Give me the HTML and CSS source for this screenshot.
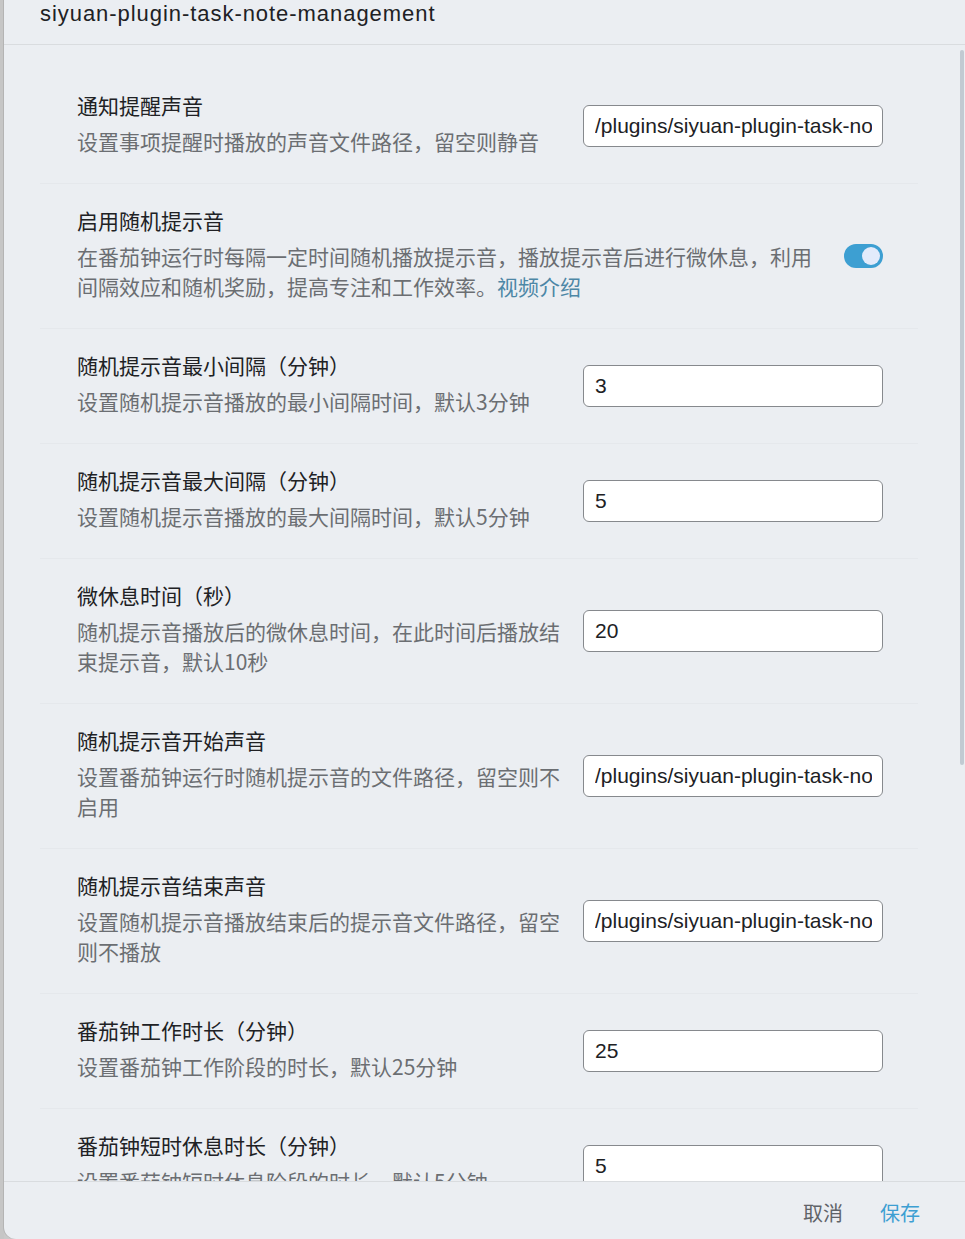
FILE: index.html
```html
<!DOCTYPE html>
<html lang="zh-CN">
<head>
<meta charset="utf-8">
<title>siyuan-plugin-task-note-management</title>
<link rel="stylesheet" href="styles.css">
</head>
<body>
<div class="edge"></div>
<div class="dialog">
  <div class="dialog-header">siyuan-plugin-task-note-management</div>
  <div class="dialog-body">
    <label class="item">
      <div class="label">
        <div class="title">通知提醒声音</div>
        <div class="desc">设置事项提醒时播放的声音文件路径，留空则静音</div>
      </div>
      <input class="field" type="text" value="/plugins/siyuan-plugin-task-note-management/audios/notify.mp3">
    </label>
    <label class="item">
      <div class="label">
        <div class="title">启用随机提示音</div>
        <div class="desc">在番茄钟运行时每隔一定时间随机播放提示音，播放提示音后进行微休息，利用间隔效应和随机奖励，提高专注和工作效率。<a class="link" href="#">视频介绍</a></div>
      </div>
      <span class="switch"><span class="knob"></span></span>
    </label>
    <label class="item">
      <div class="label">
        <div class="title">随机提示音最小间隔（分钟）</div>
        <div class="desc">设置随机提示音播放的最小间隔时间，默认3分钟</div>
      </div>
      <input class="field" type="text" value="3">
    </label>
    <label class="item">
      <div class="label">
        <div class="title">随机提示音最大间隔（分钟）</div>
        <div class="desc">设置随机提示音播放的最大间隔时间，默认5分钟</div>
      </div>
      <input class="field" type="text" value="5">
    </label>
    <label class="item">
      <div class="label">
        <div class="title">微休息时间（秒）</div>
        <div class="desc">随机提示音播放后的微休息时间，在此时间后播放结束提示音，默认10秒</div>
      </div>
      <input class="field" type="text" value="20">
    </label>
    <label class="item">
      <div class="label">
        <div class="title">随机提示音开始声音</div>
        <div class="desc">设置番茄钟运行时随机提示音的文件路径，留空则不启用</div>
      </div>
      <input class="field" type="text" value="/plugins/siyuan-plugin-task-note-management/audios/random_start.mp3">
    </label>
    <label class="item">
      <div class="label">
        <div class="title">随机提示音结束声音</div>
        <div class="desc">设置随机提示音播放结束后的提示音文件路径，留空则不播放</div>
      </div>
      <input class="field" type="text" value="/plugins/siyuan-plugin-task-note-management/audios/random_end.mp3">
    </label>
    <label class="item">
      <div class="label">
        <div class="title">番茄钟工作时长（分钟）</div>
        <div class="desc">设置番茄钟工作阶段的时长，默认25分钟</div>
      </div>
      <input class="field" type="text" value="25">
    </label>
    <label class="item">
      <div class="label">
        <div class="title">番茄钟短时休息时长（分钟）</div>
        <div class="desc">设置番茄钟短时休息阶段的时长，默认5分钟</div>
      </div>
      <input class="field" type="text" value="5">
    </label>
  </div>
  <div class="scroll-thumb"></div>
  <div class="dialog-footer">
    <button class="btn btn-cancel" type="button">取消</button>
    <button class="btn btn-save" type="button">保存</button>
  </div>
</div>
</body>
</html>
```
FILE: styles.css
```css
* { box-sizing: border-box; }

html, body {
  margin: 0;
  padding: 0;
  height: 100%;
}

body {
  display: flex;
  background: #c9c9c9;
  font-family: "Noto Sans CJK SC", "Noto Sans", sans-serif;
  overflow: hidden;
}

.edge {
  width: 4px;
  flex: none;
  background: #c6c6c6;
}

.dialog {
  position: relative;
  flex: 1;
  display: flex;
  flex-direction: column;
  height: 1239px;
  background: #ebeef2;
  border-bottom-left-radius: 12px;
  box-shadow: -1px 0 0 #b4b4b4;
  overflow: hidden;
}

.dialog-header {
  flex: none;
  height: 45px;
  padding-left: 36px;
  border-bottom: 1px solid #d9dcdf;
  font-family: "Liberation Sans", Arial, sans-serif;
  font-size: 22px;
  letter-spacing: 0.95px;
  line-height: 28px;
  color: #202124;
}

.dialog-body {
  flex: 1;
  min-height: 0;
  overflow: hidden;
  padding: 24px 47px 0 36px;
}

.item {
  display: flex;
  align-items: center;
  padding: 21px 35px 21px 37px;
  border-bottom: 1px solid #e5e8ec;
  cursor: default;
}

.label {
  flex: 1;
  min-width: 0;
  margin-right: 16px;
  padding-bottom: 6px;
}

.title {
  font-size: 21px;
  line-height: 30px;
  color: #202124;
}

.desc {
  margin-top: 6px;
  font-size: 21px;
  line-height: 30px;
  color: #6b6e72;
}

.link {
  color: #4d87a6;
  text-decoration: none;
}

.field {
  flex: none;
  width: 300px;
  height: 42px;
  margin: 0;
  padding: 0 10px 0 11px;
  border: 1px solid #86898d;
  border-radius: 6px;
  background: #ffffff;
  font-family: "Liberation Sans", Arial, sans-serif;
  font-size: 21px;
  color: #202124;
  outline: none;
}

.switch {
  flex: none;
  display: flex;
  align-items: center;
  justify-content: flex-end;
  width: 39px;
  height: 24px;
  padding: 0 3px;
  border-radius: 12px;
  background: #3d9fd2;
}

.knob {
  width: 18px;
  height: 18px;
  border-radius: 50%;
  background: #e3ebfb;
}

.scroll-thumb {
  position: absolute;
  right: 1px;
  top: 50px;
  width: 4px;
  height: 715px;
  border-radius: 2px;
  background: #c1cad2;
}

.dialog-footer {
  flex: none;
  height: 58px;
  display: flex;
  justify-content: flex-end;
  align-items: center;
  gap: 37px;
  padding: 5px 45px 0 0;
  border-top: 1px solid #d9dcdf;
}

.btn {
  margin: 0;
  padding: 0;
  border: 0;
  background: transparent;
  font-family: "Noto Sans CJK SC", sans-serif;
  font-size: 20px;
  line-height: 28px;
  cursor: pointer;
}

.btn-cancel { color: #5f6368; }
.btn-save { color: #3d9fd2; }
```
